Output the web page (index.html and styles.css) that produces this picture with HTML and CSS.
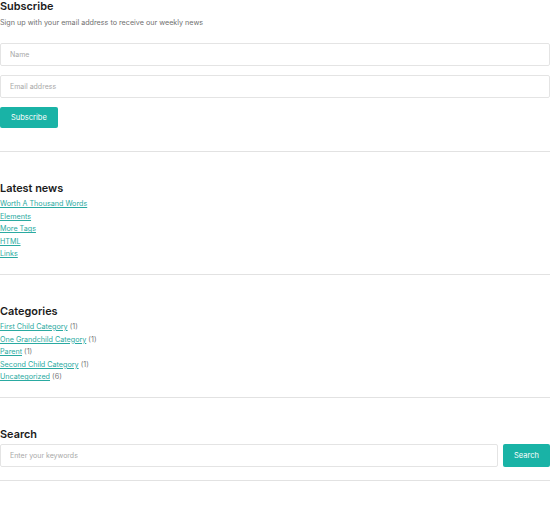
FILE: index.html
```html
<!DOCTYPE html>
<html>
<head>
    <title>Sidebar Widgets</title>
    <link rel="stylesheet" href="styles.css">
</head>
<body>
    <div class="sidebar">
        <section class="widget widget-subscribe">
            <h2>Subscribe</h2>
            <p class="widget-intro">Sign up with your email address to receive our weekly news</p>
            <form class="subscribe-form">
                <input type="text" name="name" placeholder="Name">
                <input type="email" name="email" placeholder="Email address">
                <button type="submit">Subscribe</button>
            </form>
        </section>

        <section class="widget">
            <h2>Latest news</h2>
            <ul class="widget-list">
                <li><a href="#">Worth A Thousand Words</a></li>
                <li><a href="#">Elements</a></li>
                <li><a href="#">More Tags</a></li>
                <li><a href="#">HTML</a></li>
                <li><a href="#">Links</a></li>
            </ul>
        </section>

        <section class="widget">
            <h2>Categories</h2>
            <ul class="widget-list">
                <li><a href="#">First Child Category</a> <span class="count">(1)</span></li>
                <li><a href="#">One Grandchild Category</a> <span class="count">(1)</span></li>
                <li><a href="#">Parent</a> <span class="count">(1)</span></li>
                <li><a href="#">Second Child Category</a> <span class="count">(1)</span></li>
                <li><a href="#">Uncategorized</a> <span class="count">(6)</span></li>
            </ul>
        </section>

        <section class="widget">
            <h2>Search</h2>
            <form class="search-form">
                <input type="search" name="s" placeholder="Enter your keywords">
                <button type="submit">Search</button>
            </form>
        </section>
    </div>
</body>
</html>
```

FILE: styles.css
```css
body {
    font-family: Inter, "Noto Sans", sans-serif;
    background-color: #fff;
    color: #222;
    margin: 0;
    padding: 0;
}

.sidebar {
    width: 550px;
}

.widget {
    padding: 28px 0 13px;
    border-bottom: 1px solid #e2e2e2;
}

.widget h2 {
    font-size: 10.9px;
    font-weight: 600;
    line-height: 16px;
    color: #1b1b1b;
    margin: 0 0 2px;
}

.widget-subscribe {
    padding-top: 0;
    padding-bottom: 23px;
}

.widget-subscribe h2 {
    line-height: 12px;
}

.widget-intro {
    font-size: 7.2px;
    line-height: 12px;
    color: #6f6f6f;
    margin: 5px 0 14px;
}

input {
    box-sizing: border-box;
    height: 23px;
    padding: 0 9px;
    font-family: inherit;
    font-size: 7px;
    border: 1px solid #e4e4e4;
    border-radius: 2px;
    background: #fff;
    outline: none;
}

input::placeholder {
    color: #a8a8a8;
}

button {
    height: 21px;
    padding: 0 11px;
    font-family: inherit;
    font-size: 7.5px;
    color: #fff;
    background-color: #19b3a6;
    border: none;
    border-radius: 2px;
    cursor: pointer;
}

.subscribe-form {
    display: flex;
    flex-direction: column;
    align-items: flex-start;
    gap: 9px;
}

.subscribe-form input {
    width: 100%;
}

.search-form {
    display: flex;
    gap: 5px;
}

.search-form input {
    flex: 1;
}

.search-form button {
    height: 23px;
    width: 47px;
    padding: 0;
}

.widget-list {
    list-style: none;
    margin: 1px 0 0;
    padding: 0;
}

.widget-list li {
    font-size: 7.2px;
    line-height: 12.6px;
}

.widget-list a {
    color: #2aaaa1;
    text-decoration: underline;
}

.count {
    color: #777;
}
```
